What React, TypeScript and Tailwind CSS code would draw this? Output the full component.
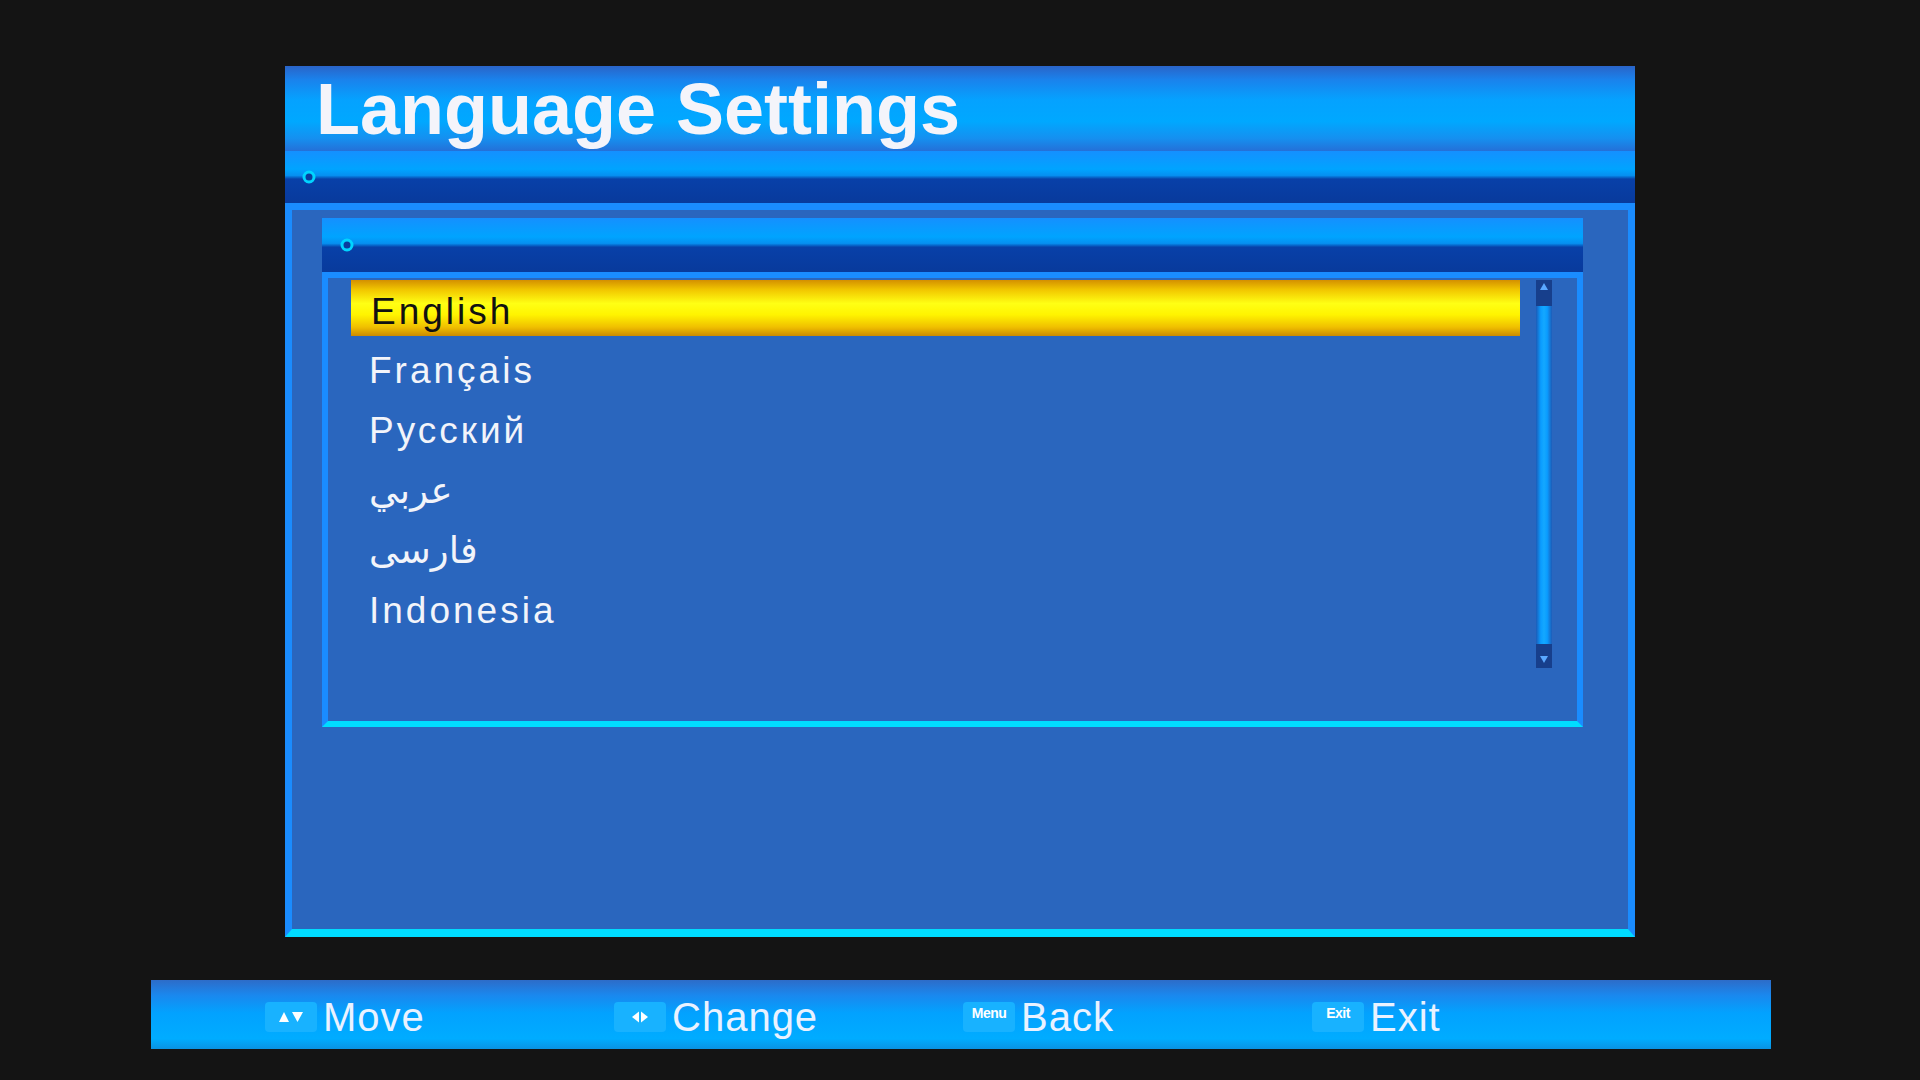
import { JSX } from "react";

const LANGUAGES = ["English", "Français", "Русский", "عربي", "فارسی", "Indonesia"];

function Ring(): JSX.Element {
  return (
    <svg width="16" height="16" viewBox="0 0 16 16">
      <circle cx="8" cy="8" r="5" fill="#0a3c9e" stroke="#00d4ff" strokeWidth="3" />
    </svg>
  );
}

function KeyBox({ children }: { children: React.ReactNode }): JSX.Element {
  return (
    <div className="w-[52px] h-[30px] rounded-[4px] bg-[#18b2ff] flex items-center justify-center">
      {children}
    </div>
  );
}

function MoveKey(): JSX.Element {
  return (
    <KeyBox>
      <svg width="26" height="12" viewBox="0 0 26 12">
        <polygon points="1,11 6,1 11,11" fill="#ffffff" />
        <polygon points="14,1 25,1 19.5,11" fill="#ffffff" />
      </svg>
    </KeyBox>
  );
}

function ChangeKey(): JSX.Element {
  return (
    <KeyBox>
      <svg width="18" height="12" viewBox="0 0 18 12">
        <polygon points="1,6 8,0.5 8,11.5" fill="#ffffff" />
        <polygon points="10,0.5 17,6 10,11.5" fill="#ffffff" />
      </svg>
    </KeyBox>
  );
}

function TextKey({ label }: { label: string }): JSX.Element {
  return (
    <KeyBox>
      <span className="text-[14px] leading-none font-bold text-white tracking-[-0.5px] -mt-[8px]">{label}</span>
    </KeyBox>
  );
}

function Hint({ icon, label, last }: { icon: JSX.Element; label: string; last?: boolean }): JSX.Element {
  return (
    <div className={last ? "flex items-center gap-[6px]" : "w-[349px] flex items-center gap-[6px]"}>
      {icon}
      <span className="text-[40px] leading-none tracking-[1px] text-[#eaf2ff]">{label}</span>
    </div>
  );
}

export default function App(): JSX.Element {
  return (
    <div className="w-[1920px] h-[1080px] bg-[#141414] overflow-hidden flex flex-col pt-[66px] font-['Liberation_Sans','DejaVu_Sans',sans-serif]">
      <div className="ml-[285px] w-[1350px] flex flex-col">
        {/* title */}
        <div className="h-[85px] pl-[31px] flex items-center bg-[linear-gradient(180deg,#2a64c8_0%,#1a82ec_16%,#05a2ff_40%,#00a8ff_65%,#1590f0_85%,#2470d8_100%)]">
          <h1 className="text-[72px] leading-none font-bold text-[#f4f4fa]">Language Settings</h1>
        </div>

        {/* sub header */}
        <div className="h-[52px] pl-[16px] flex items-center bg-[linear-gradient(180deg,#1590ff_0%,#00a4ff_35%,#0690f0_47%,#0840a8_54%,#083a9c_100%)]">
          <Ring />
        </div>

        {/* panel */}
        <div className="h-[734px] bg-[#2a66be] border-x-[7px] border-t-[7px] border-b-[8px] border-[#1a8cff] border-b-[#00dcff] pl-[30px] pt-[8px]">
          <div className="w-[1261px]">
            <div className="h-[54px] pl-[17px] flex items-center bg-[linear-gradient(180deg,#1590ff_0%,#00a4ff_35%,#0690f0_47%,#0840a8_54%,#083a9c_100%)]">
              <Ring />
            </div>

            <div className="h-[455px] border-[6px] border-[#1a8cff] border-b-[#00dcff] pl-[23px] pt-[2px] flex gap-[16px]">
              <div className="w-[1169px] flex flex-col">
                {LANGUAGES.map((lang, i) => (
                  <div key={lang} className="h-[60px]">
                    <div
                      className={
                        i === 0
                          ? "h-[56px] pl-[20px] pt-[13px] bg-[linear-gradient(180deg,#d49000_0%,#f2c800_18%,#ffff14_42%,#fff400_62%,#f0c000_84%,#cc8a00_100%)] text-[#111111]"
                          : "h-[56px] pl-[18px] pt-[12px] text-[#f2f4fa]"
                      }
                    >
                      <span className="block text-[37px] leading-none tracking-[3px]">{lang}</span>
                    </div>
                  </div>
                ))}
              </div>

              {/* scrollbar */}
              <div className="w-[16px] h-[388px] flex flex-col">
                <div className="h-[26px] bg-[#173f8c] flex justify-center pt-[3px]">
                  <svg width="8" height="7" viewBox="0 0 8 7">
                    <polygon points="0,7 4,0 8,7" fill="#5aa8ff" />
                  </svg>
                </div>
                <div className="flex-1 bg-[linear-gradient(90deg,#1c5cb8_0%,#0a9cff_30%,#14a8ff_50%,#0a9cff_70%,#1c5cb8_100%)]" />
                <div className="h-[24px] bg-[#173f8c] flex justify-center items-end pb-[5px]">
                  <svg width="8" height="7" viewBox="0 0 8 7">
                    <polygon points="0,0 8,0 4,7" fill="#5aa8ff" />
                  </svg>
                </div>
              </div>
            </div>
          </div>
        </div>
      </div>

      {/* key hints */}
      <div className="mt-[43px] ml-[151px] w-[1620px] h-[69px] pl-[114px] pt-[5px] flex items-center bg-[linear-gradient(180deg,#2d6cc8_0%,#1a88ee_22%,#02a2ff_48%,#00acff_85%,#0a92e2_100%)]">
        <Hint icon={<MoveKey />} label="Move" />
        <Hint icon={<ChangeKey />} label="Change" />
        <Hint icon={<TextKey label="Menu" />} label="Back" />
        <Hint icon={<TextKey label="Exit" />} label="Exit" last />
      </div>
    </div>
  );
}
